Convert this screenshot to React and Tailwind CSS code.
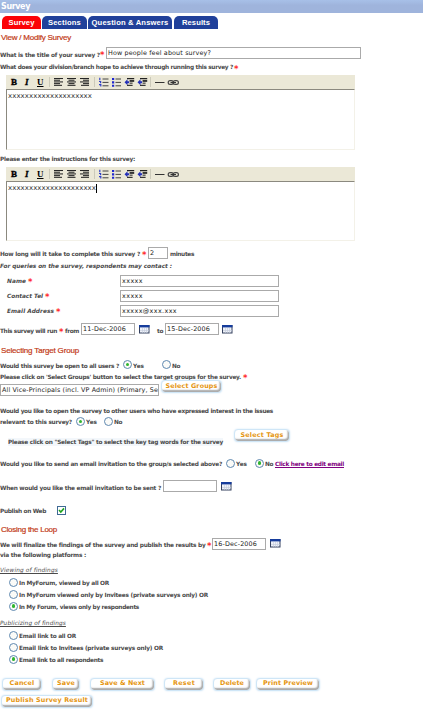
import React, { useLayoutEffect, useRef, useState } from "react";
import clsx from "clsx";

// Spreads its text evenly over the width given by its class.
function Fit({ className, innerClass, children }) {
  const box = useRef(null);
  const inner = useRef(null);
  const [spacing, setSpacing] = useState(0);
  useLayoutEffect(() => {
    const room = box.current.clientWidth;
    const used = inner.current.getBoundingClientRect().width;
    setSpacing((room - used) / inner.current.textContent.length);
  }, []);
  return (
    <span ref={box} className={clsx("block shrink-0 whitespace-nowrap", className)}>
      <span ref={inner} className={clsx("inline-block", innerClass)} style={{ letterSpacing: spacing }}>
        {children}
      </span>
    </span>
  );
}

const Label = ({ className, innerClass, children }) => (
  <Fit className={clsx("text-[5.8px] leading-[8px] font-bold text-[#4a4a4a]", className)} innerClass={innerClass}>{children}</Fit>
);

const Star = ({ className = "ml-[2px]" }) => (
  <span className={clsx("block w-[4px] shrink-0 pt-[2px] text-[8.5px] leading-[8px] font-bold text-[#ff2a2a]", className)}>*</span>
);

const Heading = ({ className, children }) => (
  <Fit className={clsx("ml-[1px] font-['Liberation_Sans'] text-[8px] leading-[10px] text-[#c23a16] [-webkit-text-stroke:0.2px_#c23a16]", className)}>
    {children}
  </Fit>
);

const Row = ({ className, children }) => <div className={clsx("flex shrink-0 items-center", className)}>{children}</div>;

const Field = ({ className, textClass, children }) => (
  <div className={clsx("h-[12px] shrink-0 overflow-hidden border border-[#aaa] bg-white pl-[1px]", className)}>
    {children && <Fit className={clsx("text-[6.4px] leading-[10px] text-[#222]", textClass)}>{children}</Fit>}
  </div>
);

const Radio = ({ on, className }) => (
  <span className={clsx("flex size-[9px] shrink-0 items-center justify-center rounded-full border border-[#5f88b0] bg-[#fbfbf8]", className)}>
    {on && <span className="size-[3.5px] rounded-full bg-[#2fb52f]" />}
  </span>
);

const Calendar = ({ className }) => (
  <svg className={clsx("h-[9px] w-[11px] shrink-0", className)} viewBox="0 0 11 9">
    <rect x="0.5" y="0.5" width="9.5" height="7.5" fill="#eef1f8" stroke="#34405e" />
    <rect x="0" y="0" width="10.5" height="2.4" fill="#163c9c" />
    <path d="M3.5 3v5M5.5 3v5M7.5 3v5M1 5.5h9" stroke="#c3cbdc" strokeWidth="0.6" />
  </svg>
);

const Button = ({ className, textClass, children }) => (
  <span className={clsx("flex h-[13px] shrink-0 items-center justify-center rounded-[4px] border border-[#cfe6f7] bg-white shadow-[inset_-1.5px_-2px_1.5px_#a9a9a9,0_0_2px_#cfe6f7]", className)}>
    <Fit className={clsx("-mt-[1px] text-[6.4px] leading-[9px] font-bold text-[#e5950f]", textClass)}>{children}</Fit>
  </span>
);

const Tab = ({ className, textClass, children }) => (
  <div className={clsx("flex h-[13px] items-center justify-center rounded-t-[5px] pt-[1px]", className)}>
    <Fit className={clsx("font-['Liberation_Sans'] text-[7.6px] leading-[10px] font-bold text-white", textClass)}>{children}</Fit>
  </div>
);

const Lines = ({ x, rows }) =>
  rows.map(([dx, w], i) => <rect key={i} x={x + dx} y={3 + i * 1.7} width={w} height="1.05" fill="#262626" />);

const Indent = ({ x }) => (
  <g>
    <path d={`M${x - 0.5} 7.2l3-3v2h1.6v2h-1.6v2z`} fill="#2430b8" />
    <rect x={x + 2} y="3" width="7.2" height="1.2" fill="#222" />
    <rect x={x + 4.6} y="4.9" width="4.6" height="2" fill="#333" />
    <rect x={x + 4.6} y="7.6" width="3" height="1.1" fill="#333" />
    <rect x={x + 2} y="9.8" width="5.6" height="1.1" fill="#222" />
  </g>
);

const Toolbar = () => (
  <div className="flex h-[14px] items-center bg-[#ebe8d7] font-['Liberation_Serif'] text-[9px] leading-[12px] font-bold text-black">
    <span className="ml-[5px] w-[13px] [-webkit-text-stroke:0.4px_black]">B</span>
    <span className="w-[13px] pl-[1px] italic [-webkit-text-stroke:0.3px_black]">I</span>
    <span className="w-[10px] underline decoration-1 underline-offset-1">U</span>
    <svg className="h-[14px] w-[140px]" viewBox="0 0 140 14">
      <path d="M2.5 2v10M47.5 2v10M103.5 2v10" stroke="#c4c1b2" strokeWidth="0.8" />
      <Lines x={7} rows={[[0, 9], [0, 6], [0, 9], [0, 6], [0, 8]]} />
      <Lines x={20} rows={[[0, 9], [1.5, 6], [0, 9], [1.5, 6], [0.5, 8]]} />
      <Lines x={33} rows={[[0, 9], [3, 6], [0, 9], [3, 6], [1, 8]]} />
      <path d="M52.8 2.8v2.4M52 6.5h1.6v1.8M52 9.6h1.8v1.8" stroke="#3040c8" strokeWidth="1.2" fill="none" />
      <path d="M55.5 4h6M55.5 7.4h6M55.5 10.8h6M68.5 4h5.5M68.5 7.4h5.5M68.5 10.8h5.5" stroke="#444" strokeWidth="1" />
      <path d="M65 4h2.2M65 7.4h2.2M65 10.8h2.2" stroke="#2028d0" strokeWidth="2.1" />
      <Indent x={78} />
      <Indent x={91} />
      <path d="M108 7.5h9.5" stroke="#333" strokeWidth="1" />
      <rect x="121.2" y="5.6" width="5.2" height="3.8" rx="1.9" fill="none" stroke="#444" strokeWidth="1.2" />
      <rect x="126.2" y="5.6" width="5.2" height="3.8" rx="1.9" fill="none" stroke="#444" strokeWidth="1.2" />
      <path d="M123.5 7.5h5.5" stroke="#333" strokeWidth="1.2" />
    </svg>
  </div>
);

const Editor = ({ className, children }) => (
  <div className={clsx("ml-[6px] flex w-[349px] shrink-0 flex-col", className)}>
    <Toolbar />
    <div className="flex grow items-start border-t border-r border-b border-l border-t-[#8b897f] border-r-[#f3f1e8] border-b-[#f3f1e8] border-l-[#8b897f] pt-[2px]">
      {children}
    </div>
  </div>
);

const Choice = ({ on, textClass, children }) => (
  <Row className="h-[12px]">
    <Radio on={on} className="ml-[9px]" />
    <Label className={clsx("mt-[2px] ml-[1px]", textClass)}>{children}</Label>
  </Row>
);

export default function App() {
  return (
    <div className="flex h-[709px] w-[423px] flex-col overflow-hidden bg-white font-['DejaVu_Sans',sans-serif]">
      <Row className="h-[13px] bg-linear-to-b from-[#a7c0e8] to-[#9fb4dc] to-40%">
        <Fit className="ml-[1px] w-[29px] text-[8px] leading-[11px] font-bold text-white">Survey</Fit>
      </Row>

      <div className="flex h-[16px] shrink-0 items-end pl-[2px]">
        <Tab className="w-[39px] bg-[#fb0207]" textClass="w-[26px]">Survey</Tab>
        <Tab className="ml-[1px] w-[45px] bg-[#20409a]" textClass="w-[33px]">Sections</Tab>
        <Tab className="ml-[1px] w-[84px] bg-[#20409a]" textClass="w-[77px]">Question &amp; Answers</Tab>
        <Tab className="ml-[2px] w-[44px] bg-[#20409a]" textClass="w-[28px]">Results</Tab>
      </div>

      <Row className="h-[17px]"><Heading className="w-[70px]">View / Modify Survey</Heading></Row>

      <Row className="h-[14px]">
        <Label className="mt-[3px] w-[100px]">What is the title of your survey ?</Label>
        <Star className="mt-[2px] ml-0" />
        <Field className="ml-[2px] w-[255px]" textClass="w-[103px]">How people feel about survey?</Field>
      </Row>
      <Row className="h-[15px]">
        <Label className="-mt-[1px] w-[233px]">What does your division/branch hope to achieve through running this survey ?</Label>
        <Star className="ml-[1px]" />
      </Row>

      <Editor className="h-[75px]">
        <Fit className="ml-[1px] w-[84px] text-[7px] leading-[9px] text-[#333]">xxxxxxxxxxxxxxxxxxxx</Fit>
      </Editor>
      <Row className="h-[17px]"><Label className="w-[135px]">Please enter the instructions for this survey:</Label></Row>
      <Editor className="h-[74px]">
        <Fit className="ml-[1px] w-[88px] text-[7px] leading-[9px] text-[#333]">xxxxxxxxxxxxxxxxxxxxx</Fit>
        <span className="h-[9px] w-px bg-black" />
      </Editor>

      <Row className="mt-[5px] h-[13px]">
        <Label className="mt-[3px] w-[140px]">How long will it take to complete this survey ?</Label>
        <Star className="mt-[3px] ml-[2px]" />
        <Field className="ml-[2px] w-[20px]" textClass="w-[5px]">2</Field>
        <Label className="mt-[3px] ml-[2px] w-[24px]">minutes</Label>
      </Row>
      <Row className="h-[14px]">
        <Label className="w-[172px] italic">For queries on the survey, respondents may contact :</Label>
      </Row>
      <Row className="h-[15px]">
        <Label className="ml-[7px] w-[19px] italic">Name</Label>
        <Star />
        <Field className="ml-[88px] w-[159px]" textClass="w-[21px]">xxxxx</Field>
      </Row>
      <Row className="h-[15px]">
        <Label className="ml-[7px] w-[36px] italic">Contact Tel</Label>
        <Star />
        <Field className="ml-[71px] w-[159px]" textClass="w-[21px]">xxxxx</Field>
      </Row>
      <Row className="h-[15px]">
        <Label className="ml-[7px] w-[47px] italic">Email Address</Label>
        <Star />
        <Field className="ml-[60px] w-[159px]" textClass="w-[55px]">xxxxx@xxx.xxx</Field>
      </Row>

      <Row className="mt-[3px] h-[16px]">
        <Label className="mt-[3px] w-[57px]">This survey will run</Label>
        <Star className="mt-[3px] ml-[2px]" />
        <Label className="mt-[3px] ml-[2px] w-[14px]">from</Label>
        <Field className="ml-[2px] w-[54px]" textClass="w-[43px]">11-Dec-2006</Field>
        <Calendar className="ml-[4px]" />
        <Label className="mt-[3px] ml-[7px] w-[6px]">to</Label>
        <Field className="ml-[2px] w-[54px]" textClass="w-[43px]">15-Dec-2006</Field>
        <Calendar className="ml-[3px]" />
      </Row>

      <Row className="mt-[7px] h-[14px]"><Heading className="w-[78px]">Selecting Target Group</Heading></Row>
      <Row className="h-[13px]">
        <Label className="mt-[2px] w-[119px]">Would this survey be open to all users ?</Label>
        <Radio on className="ml-[4px]" />
        <Label className="mt-[2px] ml-[1px] w-[11px]">Yes</Label>
        <Radio className="ml-[18px]" />
        <Label className="mt-[2px] ml-[1px] w-[8px]">No</Label>
      </Row>
      <Row className="h-[11px]">
        <Label className="w-[241px]">Please click on 'Select Groups' button to select the target groups for the survey.</Label>
        <Star />
      </Row>
      <Row className="h-[17px] items-start">
        <Field className="mt-[2px] w-[159px]" textClass="w-[156px]">All Vice-Principals (incl. VP Admin) (Primary, Se</Field>
        <Button className="-mt-[2px] ml-[2px] w-[61px]" textClass="w-[52px]">Select Groups</Button>
      </Row>

      <Row className="mt-[6px] h-[12px]">
        <Label className="w-[273px]">Would you like to open the survey to other users who have expressed interest in the issues</Label>
      </Row>
      <Row className="h-[9px]">
        <Label className="mt-[1px] w-[72px]">relevant to this survey?</Label>
        <Radio on className="ml-[4px]" />
        <Label className="mt-[1px] ml-[1px] w-[11px]">Yes</Label>
        <Radio className="ml-[7px]" />
        <Label className="mt-[1px] ml-[1px] w-[8px]">No</Label>
      </Row>
      <Row className="mt-[4px] h-[17px] items-start">
        <Label className="mt-[8px] ml-[8px] w-[215px] bg-[#f3f7fb]">Please click on "Select Tags" to select the key tag words for the survey</Label>
        <Button className="-mt-[1px] ml-[11px] w-[56px]" textClass="w-[43px]">Select Tags</Button>
      </Row>

      <Row className="mt-[9px] h-[14px]">
        <Label className="mt-[2px] w-[222px]">Would you like to send an email invitation to the group/s selected above?</Label>
        <Radio className="ml-[4px]" />
        <Label className="mt-[2px] ml-[1px] w-[11px]">Yes</Label>
        <Radio on className="ml-[8px]" />
        <Label className="mt-[2px] ml-[1px] w-[8px]">No</Label>
        <Label className="mt-[2px] ml-[2px] w-[69px] text-[#800080]!" innerClass="underline">Click here to edit email</Label>
      </Row>

      <Row className="mt-[9px] h-[14px]">
        <Label className="mt-[3px] w-[161px]">When would you like the email invitation to be sent ?</Label>
        <Field className="ml-[2px] w-[54px]" />
        <Calendar className="ml-[4px]" />
      </Row>
      <Row className="mt-[10px] h-[14px]">
        <Label className="mt-[1px] w-[46px]">Publish on Web</Label>
        <span className="ml-[11px] flex size-[9px] items-center justify-center border border-[#3f6a94] bg-white">
          <svg className="size-[7px]" viewBox="0 0 7 7"><path d="M1 3l1.8 2L6 1.4" fill="none" stroke="#1fa31f" strokeWidth="1.6" /></svg>
        </span>
      </Row>
      <Row className="mt-[6px] h-[14px]"><Heading className="w-[56px]">Closing the Loop</Heading></Row>

      <Row className="h-[13px]">
        <Label className="mt-[3px] w-[205px]">We will finalize the findings of the survey and publish the results by</Label>
        <Star className="mt-[3px] ml-[2px]" />
        <Field className="ml-[1px] w-[54px]" textClass="w-[43px]">16-Dec-2006</Field>
        <Calendar className="ml-[4px]" />
      </Row>
      <Row className="h-[10px]"><Label className="w-[86px]">via the following platforms :</Label></Row>

      <Row className="mt-[4px] h-[12px]">
        <Label className="w-[58px] font-normal! italic" innerClass="underline">Viewing of findings</Label>
      </Row>
      <Choice textClass="w-[90px]">In MyForum, viewed by all OR</Choice>
      <Choice textClass="w-[189px]">In MyForum viewed only by Invitees (private surveys only) OR</Choice>
      <Choice on textClass="w-[120px]">In My Forum, views only by respondents</Choice>
      <Row className="mt-[5px] h-[12px]">
        <Label className="w-[66px] font-normal! italic" innerClass="underline">Publicizing of findings</Label>
      </Row>
      <Choice textClass="w-[57px]">Email link to all OR</Choice>
      <Choice textClass="w-[144px]">Email link to Invitees (private surveys only) OR</Choice>
      <Choice on textClass="w-[84px]">Email link to all respondents</Choice>

      <Row className="mt-[12px] h-[14px] pl-[2px]">
        <Button className="w-[40px]" textClass="w-[25px]">Cancel</Button>
        <Button className="ml-[10px] w-[28px]" textClass="w-[18px]">Save</Button>
        <Button className="ml-[10px] w-[65px]" textClass="w-[45px]">Save &amp; Next</Button>
        <Button className="ml-[9px] w-[40px]" textClass="w-[22px]">Reset</Button>
        <Button className="ml-[9px] w-[38px]" textClass="w-[24px]">Delete</Button>
        <Button className="ml-[5px] w-[64px]" textClass="w-[50px]">Print Preview</Button>
      </Row>
      <Row className="mt-[3px] h-[14px] pl-[1px]">
        <Button className="w-[92px]" textClass="w-[82px]">Publish Survey Result</Button>
      </Row>
    </div>
  );
}
